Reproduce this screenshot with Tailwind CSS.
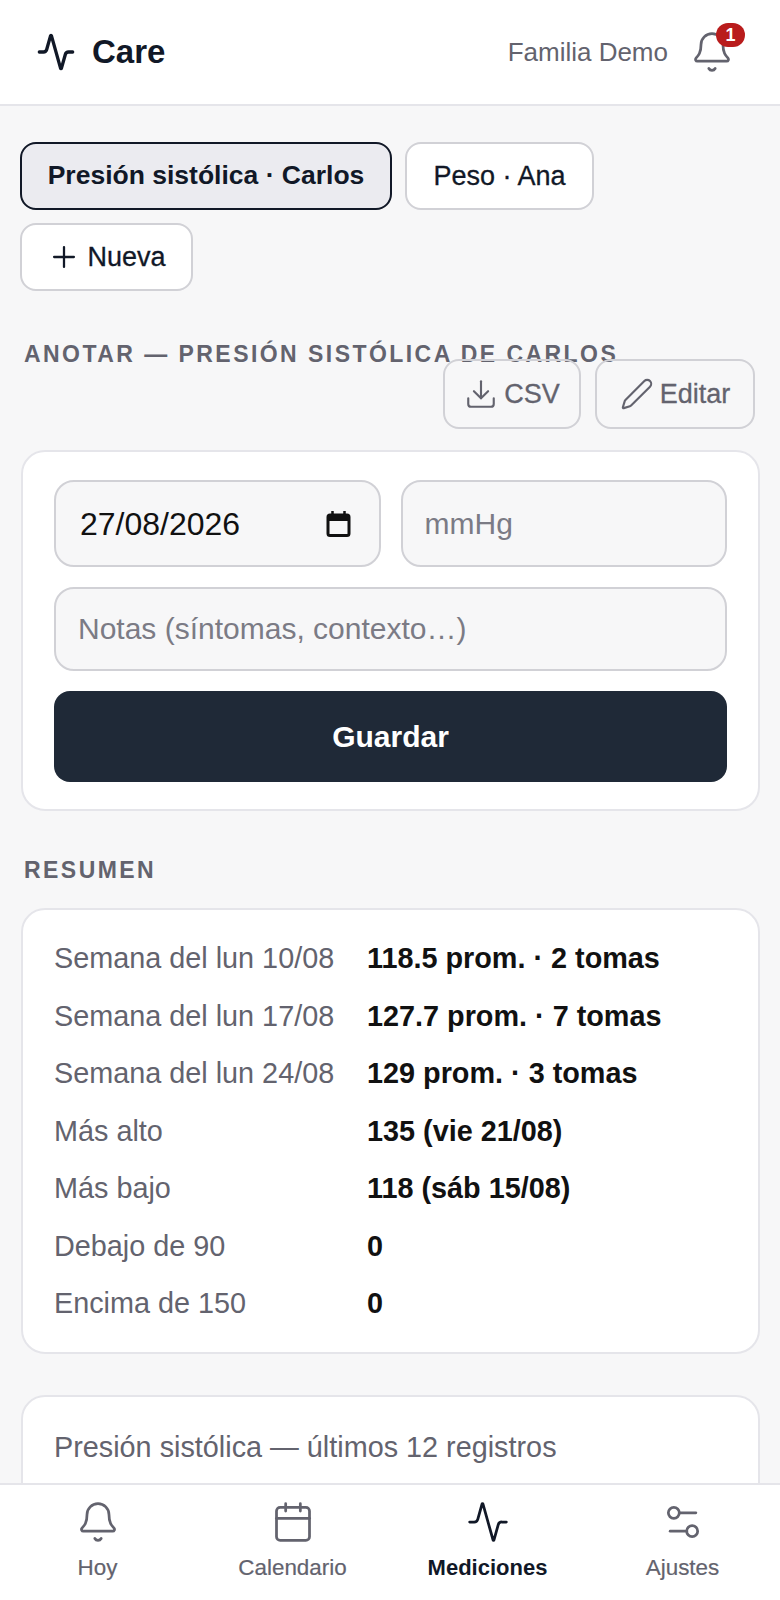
<!doctype html>
<html lang="es"><head><meta charset="utf-8"><script src="https://cdn.jsdelivr.net/npm/@tailwindcss/browser@4"></script></head>
<body class="m-0">
<div class="relative w-[780px] h-[1600px] overflow-hidden bg-[#f7f7f8] font-['Liberation_Sans',sans-serif] text-[#111827]">
  <header class="h-[106px] bg-white border-b-2 border-[#e5e5ea] flex items-center justify-between pl-[36px] pr-[46px]">
    <div class="flex items-center gap-[16px]">
      <svg class="w-[40px] h-[40px] text-[#111827]" viewBox="0 0 24 24" fill="none" stroke="currentColor" stroke-width="2" stroke-linecap="round" stroke-linejoin="round"><path d="M22 12h-2.48a2 2 0 0 0-1.93 1.46l-2.35 8.36a.25.25 0 0 1-.48 0L9.24 2.18a.25.25 0 0 0-.48 0l-2.35 8.36A2 2 0 0 1 4.49 12H2"/></svg>
      <span class="text-[33px] font-bold">Care</span>
    </div>
    <div class="flex items-center gap-[22px]">
      <span class="text-[26px] text-[#63636e]">Familia Demo</span>
      <div class="relative w-[44px] h-[44px]">
        <svg class="w-[44px] h-[44px] text-[#63636e]" viewBox="0 0 24 24" fill="none" stroke="currentColor" stroke-width="1.5" stroke-linecap="round" stroke-linejoin="round"><path d="M10.268 21a2 2 0 0 0 3.464 0"/><path d="M3.262 15.326A1 1 0 0 0 4 17h16a1 1 0 0 0 .74-1.673C19.41 13.956 18 12.499 18 8A6 6 0 0 0 6 8c0 4.499-1.411 5.956-2.738 7.326"/></svg>
        <span class="absolute top-[-7px] right-[-11px] w-[29px] h-[24px] rounded-full bg-[#b91c1c] text-white text-[18px] font-bold flex items-center justify-center">1</span>
      </div>
    </div>
  </header>

  <main class="px-[20px] pt-[36px]">
    <div class="flex flex-wrap gap-[13px] w-[600px]">
      <button class="h-[68px] w-[372px] rounded-[16px] border-2 border-[#111827] bg-[#ebebf0] text-[26.5px] font-bold whitespace-nowrap">Presión sistólica · Carlos</button>
      <button class="h-[68px] w-[189px] rounded-[16px] border-2 border-[#d1d1d6] bg-white text-[27px] [-webkit-text-stroke:0.3px] whitespace-nowrap">Peso · Ana</button>
      <button class="h-[68px] w-[173px] rounded-[16px] border-2 border-[#d1d1d6] bg-white text-[27px] [-webkit-text-stroke:0.3px] flex items-center justify-center gap-[6px]">
        <svg class="w-[34px] h-[34px]" viewBox="0 0 24 24" fill="none" stroke="currentColor" stroke-width="1.6" stroke-linecap="round" stroke-linejoin="round"><path d="M5 12h14"/><path d="M12 5v14"/></svg>Nueva</button>
    </div>

    <h2 class="mt-[55px] ml-[4px] h-[16px] leading-[16px] text-[23px] font-bold tracking-[2.45px] uppercase text-[#63636e] whitespace-nowrap">Anotar — Presión sistólica de Carlos</h2>
    <div class="flex justify-end gap-[14px] pr-[5px] mt-[-3px]">
      <button class="h-[70px] w-[138px] rounded-[16px] border-2 border-[#d1d1d6] text-[27px] [-webkit-text-stroke:0.3px] text-[#63636e] flex items-center justify-center gap-[6px]">
        <svg class="w-[34px] h-[34px]" viewBox="0 0 24 24" fill="none" stroke="currentColor" stroke-width="1.5" stroke-linecap="round" stroke-linejoin="round"><path d="M12 15V3"/><path d="M21 15v4a2 2 0 0 1-2 2H5a2 2 0 0 1-2-2v-4"/><path d="m7 10 5 5 5-5"/></svg>CSV</button>
      <button class="h-[70px] w-[160px] rounded-[16px] border-2 border-[#d1d1d6] text-[27px] [-webkit-text-stroke:0.3px] text-[#63636e] flex items-center justify-center gap-[6px]">
        <svg class="w-[34px] h-[34px]" viewBox="0 0 24 24" fill="none" stroke="currentColor" stroke-width="1.5" stroke-linecap="round" stroke-linejoin="round"><path d="M21.174 6.812a1 1 0 0 0-3.986-3.987L3.842 16.174a2 2 0 0 0-.5.83l-1.321 4.352a.5.5 0 0 0 .623.622l4.353-1.32a2 2 0 0 0 .83-.497z"/></svg>Editar</button>
    </div>

    <section class="mt-[21px] ml-[1px] w-[739px] h-[361px] bg-white rounded-[24px] border-2 border-[#e5e5ea] px-[31px] pt-[28px] flex flex-col gap-[20px]">
      <div class="grid grid-cols-2 gap-[20px]">
        <div class="h-[87px] rounded-[20px] border-2 border-[#d1d1d6] bg-[#f7f7f8] pl-[24px] pr-[28px] flex items-center justify-between text-[32px] text-[#111111]">
          <span>27/08/2026</span>
          <svg class="w-[25px] h-[26px]" viewBox="0 0 24 26" fill="none" stroke="#111111" stroke-width="3"><rect x="1.5" y="4" width="21" height="20.5" rx="2"/><path d="M1.5 7h21" stroke-width="6"/><path d="M6 0v4M18 0v4" stroke-width="2.5"/></svg>
        </div>
        <input class="h-[87px] rounded-[20px] border-2 border-[#d1d1d6] bg-[#f7f7f8] px-[22px] text-[30px] placeholder:text-[#7b7b85] outline-none w-full" placeholder="mmHg">
      </div>
      <input class="h-[84px] rounded-[20px] border-2 border-[#d1d1d6] bg-[#f7f7f8] px-[22px] text-[30px] placeholder:text-[#7b7b85] outline-none w-full" placeholder="Notas (síntomas, contexto…)">
      <button class="h-[91px] rounded-[16px] bg-[#1f2937] text-white text-[30px] font-bold">Guardar</button>
    </section>

    <h2 class="mt-[51px] ml-[4px] h-[16px] leading-[16px] text-[23px] font-bold tracking-[2.45px] uppercase text-[#63636e]">Resumen</h2>

    <section class="mt-[30px] ml-[1px] w-[739px] h-[446px] bg-white rounded-[24px] border-2 border-[#e5e5ea] px-[31px] pt-[20px] text-[28.8px]">
      <div class="grid grid-cols-[313px_1fr] auto-rows-[57.5px] items-center">
        <span class="text-[#63636e]">Semana del lun 10/08</span><b class="font-bold text-[#111111]">118.5 prom. · 2 tomas</b>
        <span class="text-[#63636e]">Semana del lun 17/08</span><b class="font-bold text-[#111111]">127.7 prom. · 7 tomas</b>
        <span class="text-[#63636e]">Semana del lun 24/08</span><b class="font-bold text-[#111111]">129 prom. · 3 tomas</b>
        <span class="text-[#63636e]">Más alto</span><b class="font-bold text-[#111111]">135 (vie 21/08)</b>
        <span class="text-[#63636e]">Más bajo</span><b class="font-bold text-[#111111]">118 (sáb 15/08)</b>
        <span class="text-[#63636e]">Debajo de 90</span><b class="font-bold text-[#111111]">0</b>
        <span class="text-[#63636e]">Encima de 150</span><b class="font-bold text-[#111111]">0</b>
      </div>
    </section>

    <section class="mt-[41px] ml-[1px] w-[739px] h-[300px] bg-white rounded-[24px] border-2 border-[#e5e5ea] px-[31px] pt-[29px] text-[28.8px] text-[#63636e]">Presión sistólica — últimos 12 registros</section>
  </main>

  <nav class="absolute left-0 right-0 bottom-0 h-[117px] bg-white border-t-2 border-[#e5e5ea] grid grid-cols-4 text-[22.4px] [-webkit-text-stroke:0.2px] text-[#63636e]">
    <a class="flex flex-col items-center pt-[15px] gap-[7px]">
      <svg class="w-[44px] h-[44px]" viewBox="0 0 24 24" fill="none" stroke="currentColor" stroke-width="1.5" stroke-linecap="round" stroke-linejoin="round"><path d="M10.268 21a2 2 0 0 0 3.464 0"/><path d="M3.262 15.326A1 1 0 0 0 4 17h16a1 1 0 0 0 .74-1.673C19.41 13.956 18 12.499 18 8A6 6 0 0 0 6 8c0 4.499-1.411 5.956-2.738 7.326"/></svg>Hoy</a>
    <a class="flex flex-col items-center pt-[15px] gap-[7px]">
      <svg class="w-[44px] h-[44px]" viewBox="0 0 24 24" fill="none" stroke="currentColor" stroke-width="1.5" stroke-linecap="round" stroke-linejoin="round"><path d="M8 2v4"/><path d="M16 2v4"/><rect width="18" height="18" x="3" y="4" rx="2"/><path d="M3 10h18"/></svg>Calendario</a>
    <a class="flex flex-col items-center pt-[15px] gap-[7px] text-[#111827] font-bold text-[22px] [-webkit-text-stroke:0px]">
      <svg class="w-[44px] h-[44px]" viewBox="0 0 24 24" fill="none" stroke="currentColor" stroke-width="1.5" stroke-linecap="round" stroke-linejoin="round"><path d="M22 12h-2.48a2 2 0 0 0-1.93 1.46l-2.35 8.36a.25.25 0 0 1-.48 0L9.24 2.18a.25.25 0 0 0-.48 0l-2.35 8.36A2 2 0 0 1 4.49 12H2"/></svg>Mediciones</a>
    <a class="flex flex-col items-center pt-[15px] gap-[7px]">
      <svg class="w-[44px] h-[44px]" viewBox="0 0 24 24" fill="none" stroke="currentColor" stroke-width="1.5" stroke-linecap="round" stroke-linejoin="round"><path d="M14 17H5"/><path d="M19 7h-9"/><circle cx="17" cy="17" r="3"/><circle cx="7" cy="7" r="3"/></svg>Ajustes</a>
  </nav>
</div>
</body></html>
